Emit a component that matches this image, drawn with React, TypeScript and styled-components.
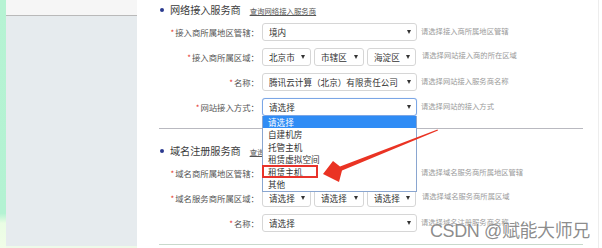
import React from 'react';
import styled, { createGlobalStyle } from 'styled-components';

const GlobalStyle = createGlobalStyle`
  html, body {
    margin: 0;
    padding: 0;
    width: 602px;
    height: 248px;
    overflow: hidden;
    background: #ffffff;
    font-family: "Noto Sans CJK SC", "Liberation Sans", sans-serif;
  }
`;

type Field = {
  label: string;
  hint: string;
  kind: 'single' | 'triple';
  values: string[];
  focused?: boolean;
};

const networkFields: Field[] = [
  { label: '接入商所属地区管辖：', hint: '请选择接入商所属地区管辖', kind: 'single', values: ['境内'] },
  { label: '接入商所属区域：', hint: '请选择网站接入商的所在区域', kind: 'triple', values: ['北京市', '市辖区', '海淀区'] },
  { label: '名称：', hint: '请选择网站接入服务商名称', kind: 'single', values: ['腾讯云计算（北京）有限责任公司'] },
  { label: '网站接入方式：', hint: '请选择网站的接入方式', kind: 'single', values: ['请选择'], focused: true }
];

// first select of this block sits under the open option list, so it shows no text
const domainFields: Field[] = [
  { label: '域名商所属地区管辖：', hint: '请选择域名服务商所属地区管辖', kind: 'single', values: [''] },
  { label: '域名服务商所属区域：', hint: '请选择域名服务商所属区域', kind: 'triple', values: ['请选择', '请选择', '请选择'] },
  { label: '名称：', hint: '请选择域名注册服务商名称', kind: 'single', values: ['请选择'] }
];

const options = ['请选择', '自建机房', '托管主机', '租赁虚拟空间', '租赁主机', '其他'];

const SelectBox: React.FC<{ value: string; width: number; focused?: boolean }> = ({ value, width, focused }) => (
  <Select $width={width} $focused={focused}>
    <SelectText>{value}</SelectText>
    <Caret />
  </Select>
);

const FormRow: React.FC<{ field: Field; children?: React.ReactNode }> = ({ field, children }) => (
  <Row>
    <Label>
      <Star>*</Star>
      {field.label}
    </Label>
    <Control>
      {field.kind === 'single' ? (
        <SelectBox value={field.values[0]} width={155} focused={field.focused} />
      ) : (
        <Triple>
          <SelectBox value={field.values[0]} width={49} />
          <SelectBox value={field.values[1]} width={50} />
          <SelectBox value={field.values[2]} width={49} />
        </Triple>
      )}
      {children}
    </Control>
    <Hint $shift={field.kind === 'triple'}>{field.hint}</Hint>
  </Row>
);

const App: React.FC = () => {
  return (
    <Screen>
      <GlobalStyle />
      <GreenStrip />
      <Sidebar>
        <SidebarHead />
        <SidebarBody />
      </Sidebar>
      <Main>
        <Content>
          <SectionTitle>
            <Dot />
            <TitleText>网络接入服务商</TitleText>
            <QueryLink>查询网络接入服务商</QueryLink>
          </SectionTitle>
          {networkFields.map((f) => (
            <FormRow key={f.label} field={f}>
              {f.focused && (
                <OptionList>
                  {options.map((o, i) => (
                    <OptionItem key={o} $active={i === 0}>
                      {o}
                    </OptionItem>
                  ))}
                  <Highlight />
                </OptionList>
              )}
            </FormRow>
          ))}
          <Divider />
          <SectionTitle $second>
            <Dot />
            <TitleText>域名注册服务商</TitleText>
            <QueryLink>查询域名注册服务商</QueryLink>
          </SectionTitle>
          {domainFields.map((f) => (
            <FormRow key={f.label + f.hint} field={f} />
          ))}
          <BottomLine />
        </Content>
      </Main>
      <RightEdge />
      <Annotation width="602" height="248" viewBox="0 0 602 248">
        <polygon
          points="438,130.5 342,170.5 339,182 323,174 333,161 340,166.5 437.5,129.5"
          fill="#ea3323"
        />
      </Annotation>
      <Watermark>CSDN @赋能大师兄</Watermark>
    </Screen>
  );
};

export default App;

const Screen = styled.div`
  position: relative;
  display: flex;
  width: 602px;
  height: 248px;
  overflow: hidden;
  background: #ffffff;
`;

const GreenStrip = styled.div`
  width: 6px;
  flex: none;
  background: linear-gradient(to bottom, #b6f3d3 0%, #b3f2d2 86%, #eafde4 90%, #f1fde8 100%);
`;

const Sidebar = styled.div`
  width: 131px;
  flex: none;
  display: flex;
  flex-direction: column;
  border-bottom: 2px solid #eefae9;
`;

const SidebarHead = styled.div`
  height: 15px;
  background: #f6f6f6;
  border-bottom: 1px solid #b9b9b9;
`;

const SidebarBody = styled.div`
  flex: 1;
  background: #e6ebee;
`;

const Main = styled.div`
  flex: 1;
  padding-left: 22px;
  background: #ffffff;
`;

const RightEdge = styled.div`
  width: 3px;
  flex: none;
  border-left: 1px solid #ededed;
  background: #ffffff;
`;

const Content = styled.div`
  width: 424px;
  display: flex;
  flex-direction: column;
`;

const SectionTitle = styled.div<{ $second?: boolean }>`
  height: 19px;
  display: flex;
  align-items: center;
  margin-top: ${(p) => (p.$second ? '12px' : '0')};
`;

const Dot = styled.span`
  width: 4px;
  height: 4px;
  border-radius: 50%;
  background: #2b3a8f;
  margin-left: 1px;
  margin-right: 6px;
`;

const TitleText = styled.span`
  font-size: 10.2px;
  color: #3c3c3c;
  letter-spacing: -0.1px;
`;

const QueryLink = styled.span`
  font-size: 7.4px;
  color: #555;
  text-decoration: underline;
  margin-left: 9px;
  margin-top: 1px;
`;

const Row = styled.div`
  height: 25px;
  display: flex;
  align-items: center;
`;

const Label = styled.div`
  width: 100px;
  text-align: right;
  font-size: 8.4px;
  color: #555;
  white-space: nowrap;
  margin-right: 3px;
`;

const Star = styled.span`
  color: #e5332a;
  font-size: 8px;
  margin-right: 1px;
`;

const Control = styled.div`
  position: relative;
`;

const Triple = styled.div`
  display: flex;
  gap: 3px;
`;

const Select = styled.div<{ $width: number; $focused?: boolean }>`
  width: ${(p) => p.$width}px;
  height: 18px;
  box-sizing: border-box;
  display: flex;
  align-items: center;
  padding: 0 5px 0 6px;
  border: 1px solid ${(p) => (p.$focused ? '#7ba6e6' : '#d6d6d6')};
  border-radius: 3px;
  background: #fff;
  box-shadow: ${(p) => (p.$focused ? '0 0 1px #a9c6f0' : 'none')};
`;

const SelectText = styled.span`
  flex: 1;
  font-size: 8.6px;
  color: #333;
  white-space: nowrap;
  overflow: hidden;
`;

const Caret = styled.span`
  width: 0;
  height: 0;
  border-left: 2.5px solid transparent;
  border-right: 2.5px solid transparent;
  border-top: 4px solid #333;
  flex: none;
`;

const Hint = styled.div<{ $shift?: boolean }>`
  margin-left: ${(p) => (p.$shift ? '6px' : '4px')};
  margin-top: ${(p) => (p.$shift ? '-4px' : '-2px')};
  font-size: 7.3px;
  color: #9a9a9a;
  white-space: nowrap;
`;

const OptionList = styled.div`
  position: absolute;
  top: 100%;
  left: 0;
  width: 155px;
  box-sizing: border-box;
  border: 1px solid #8aa6d0;
  border-top: none;
  background: #fff;
  z-index: 5;
`;

const OptionItem = styled.div<{ $active?: boolean }>`
  height: 12.5px;
  line-height: 12.5px;
  padding-left: 5px;
  font-size: 8.6px;
  color: ${(p) => (p.$active ? '#fff' : '#333')};
  background: ${(p) => (p.$active ? '#2f8cf5' : '#fff')};
  white-space: nowrap;
`;

const Highlight = styled.div`
  position: absolute;
  left: -1px;
  top: 49px;
  width: 56px;
  height: 13.5px;
  box-sizing: border-box;
  border: 2px solid #e8332b;
`;

const Divider = styled.div`
  height: 1px;
  background: #b9b9c0;
  margin-top: 9px;
`;

const BottomLine = styled.div`
  margin-top: 9px;
  height: 1px;
  background: #c9d9cc;
`;

const Annotation = styled.svg`
  position: absolute;
  left: 0;
  top: 0;
  pointer-events: none;
  z-index: 10;
`;

const Watermark = styled.div`
  position: absolute;
  left: 430px;
  top: 216px;
  font-family: "Liberation Sans", "Noto Sans CJK SC", sans-serif;
  font-size: 18px;
  letter-spacing: -0.4px;
  color: rgba(120, 120, 120, 0.85);
  text-shadow: 0 0 1px #fff;
  white-space: nowrap;
  z-index: 11;
`;
